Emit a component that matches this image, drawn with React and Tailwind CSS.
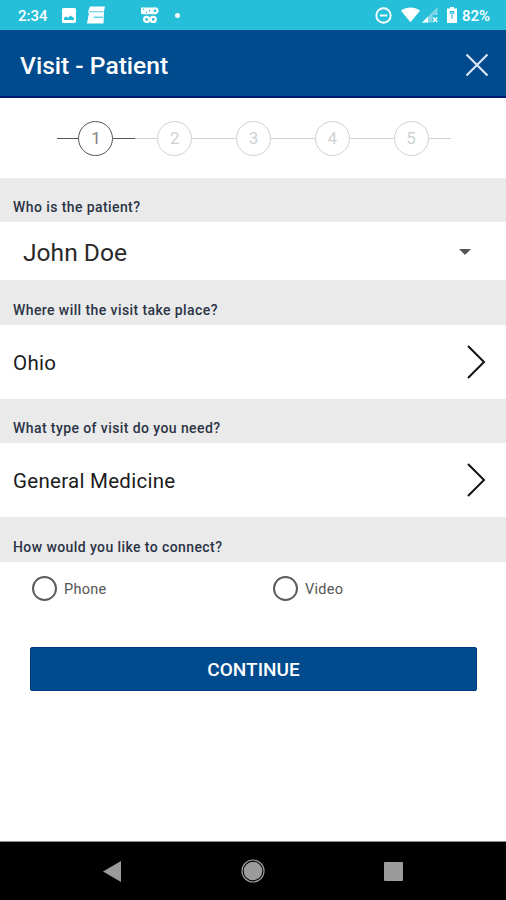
import React from 'react';

const steps = [1, 2, 3, 4, 5];

const StatusBar = () => (
    <div className="h-[30px] bg-[#26bfd9] text-white flex items-center justify-between pl-[17px] pr-[16px]">
        <div className="flex items-center">
            <span className="w-[45px] text-[15px] font-medium leading-none pt-[3px] pl-px">2:34</span>
            <svg width="14" height="15" viewBox="0 0 14 15">
                <rect width="14" height="15" rx="1.5" fill="currentColor" />
                <path d="M2 12V10l2-1.5 2 1.3 2.4-2.3L12 10v2z" fill="#26bfd9" />
            </svg>
            <svg className="ml-[11px]" width="18" height="18" viewBox="0 0 18 18">
                <path d="M3 .5h15l-1 4.5L16.5 17.5H0L2 7H1l.7-3z" fill="currentColor" />
                <path d="M2 5.8h14.5" stroke="#26bfd9" strokeWidth="1" opacity="0.8" />
                <path d="M6.5 11.3h9.5" stroke="#26bfd9" strokeWidth="1.5" opacity="0.7" />
            </svg>
            <svg className="ml-[36px]" width="18" height="17" viewBox="0 0 18 17">
                <path d="M0 .5h12v6.7H1L0 6z" fill="currentColor" />
                <path d="M2.7 1.5v1.7M5.3 4.5v1.5M8.6 2.8v2" stroke="#26bfd9" strokeWidth="1" />
                <circle cx="14" cy="3.8" r="2.5" fill="none" stroke="currentColor" strokeWidth="2.2" />
                <circle cx="5.6" cy="12.4" r="2.5" fill="none" stroke="currentColor" strokeWidth="2.3" />
                <circle cx="12.2" cy="12.4" r="2.5" fill="none" stroke="currentColor" strokeWidth="2.3" />
            </svg>
            <span className="ml-[16px] size-[5px] rounded-full bg-white" />
        </div>
        <div className="flex items-center">
            <svg width="17" height="17" viewBox="0 0 17 17" fill="none" stroke="currentColor" strokeWidth="1.9">
                <circle cx="8.5" cy="8.5" r="7.2" />
                <path d="M4.8 8.5h7.4" />
            </svg>
            <svg className="ml-[9px]" width="19" height="16" viewBox="0 0 20 16">
                <path d="M0 3.5C6-1 14-1 20 3.5L10 15.5z" fill="currentColor" />
            </svg>
            <svg className="ml-[2px]" width="17" height="16" viewBox="0 0 17 16">
                <path d="M0 15.5L15.5 0v8h-5v7.5z" fill="currentColor" opacity="0.4" />
                <path d="M0 15.5l6-6v6z" fill="currentColor" />
                <path d="M11.2 10.5l4 4.5M15.2 10.5l-4 4.5" stroke="currentColor" strokeWidth="1.5" />
            </svg>
            <svg className="ml-[8px]" width="10" height="16" viewBox="0 0 10 16">
                <path d="M3 0h4v1.5h3V16H0V1.5h3z" fill="currentColor" />
                <path d="M5 12V5M3.3 7V4.5h3.4V7" stroke="#26bfd9" strokeWidth="1.1" fill="none" />
            </svg>
            <span className="ml-[5px] text-[15px] font-medium leading-none pt-[3px]">82%</span>
        </div>
    </div>
);

const Stepper = () => (
    <div className="h-20 flex items-center justify-center pl-px pt-px">
        {steps.map((step) => (
            <div
                key={step}
                className={`w-[78.8px] flex items-center ${step === 1 ? 'text-[#555]' : 'text-[#cfd2d3]'}`}
            >
                <div className="flex-1 h-[1.5px] bg-current" />
                <div className="size-[35px] rounded-full border-[1.5px] border-current flex items-center justify-center text-[17px]">
                    <span className={step === 1 ? 'text-[#808080]' : ''}>{step}</span>
                </div>
                <div className="flex-1 h-[1.5px] bg-current" />
            </div>
        ))}
    </div>
);

const Question = ({ className, children }) => (
    <div className={`bg-[#eaeaea] flex items-end pl-[13px] pb-[5px] text-[14px] leading-5 tracking-[0.41px] font-medium text-[#2b3446] ${className}`}>
        {children}
    </div>
);

const LinkRow = ({ children }) => (
    <div className="h-[74px] flex items-center justify-between pl-[13px] pr-[20px] text-[20.5px] tracking-[0.28px] text-[#1c1c1c]">
        <span className="pt-0.5">{children}</span>
        <svg width="20" height="34" viewBox="0 0 20 34" fill="none" stroke="#111" strokeWidth="2">
            <path d="M2 1l16 16L2 33" />
        </svg>
    </div>
);

const Radio = ({ label }) => (
    <label className="w-[241px] shrink-0 flex items-center gap-[7px] text-[14.5px] tracking-[0.3px] text-[#555]">
        <span className="size-[25px] rounded-full border-2 border-[#5c5c5c]" />
        <span className="pt-[3px]">{label}</span>
    </label>
);

const App = () => {
    return (
        <div className="w-[506px] h-[900px] bg-white flex flex-col overflow-hidden font-['Roboto',sans-serif]">
            <StatusBar />
            <div className="h-[68px] bg-[#004b8d] border-b-2 border-[#00187a] flex items-center justify-between pl-[20px] pr-[17px]">
                <h1 className="text-[24.6px] font-medium text-white pt-[7px]">Visit - Patient</h1>
                <svg className="mt-[3px]" width="24" height="24" viewBox="0 0 24 24" stroke="#dbe6f5" strokeWidth="2.2">
                    <path d="M1.5 1.5l21 21M22.5 1.5l-21 21" />
                </svg>
            </div>
            <Stepper />

            <Question className="h-[44px]">Who is the patient?</Question>
            <div className="h-[58px] flex items-center justify-between pl-[23px] pr-[35px]">
                <span className="text-[24.6px] text-[#2a2a2a] pt-[5px]">John Doe</span>
                <svg className="mt-px" width="12" height="6" viewBox="0 0 12 6">
                    <path d="M0 0h12L6 6z" fill="#555" />
                </svg>
            </div>

            <Question className="h-[45px]">Where will the visit take place?</Question>
            <LinkRow>Ohio</LinkRow>

            <Question className="h-[44px]">What type of visit do you need?</Question>
            <LinkRow>General Medicine</LinkRow>

            <Question className="h-[45px]">How would you like to connect?</Question>
            <div className="h-[53px] flex items-center pl-[32px]">
                <Radio label="Phone" />
                <Radio label="Video" />
            </div>

            <button className="mt-[32px] ml-[30px] w-[447px] h-[44px] shrink-0 rounded-[2px] bg-[#004b8d] border border-[#003a82] text-white text-[19px] font-medium pt-0.5">
                CONTINUE
            </button>

            <div className="mt-auto h-[59px] bg-black border-t border-[#8a8a8a] flex items-center justify-between pl-[103px] pr-[103px]">
                <svg width="19" height="21" viewBox="0 0 19 21">
                    <path d="M0 10.5L18 0v21z" fill="#9b9b9b" />
                </svg>
                <svg width="24" height="24" viewBox="0 0 24 24">
                    <circle cx="12" cy="12" r="11" fill="none" stroke="#9b9b9b" strokeWidth="1.2" />
                    <circle cx="12" cy="12" r="9.3" fill="#9b9b9b" />
                </svg>
                <svg width="19" height="19" viewBox="0 0 19 19">
                    <rect width="19" height="19" rx="1" fill="#9b9b9b" />
                </svg>
            </div>
        </div>
    );
};

export default App;
